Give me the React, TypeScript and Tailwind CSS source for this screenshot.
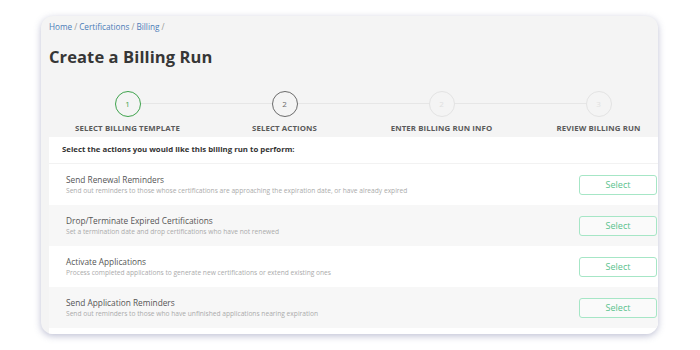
import React from "react";

const steps = [
  { n: "1", label: "SELECT BILLING TEMPLATE", state: "done" },
  { n: "2", label: "SELECT ACTIONS", state: "active" },
  { n: "2", label: "ENTER BILLING RUN INFO", state: "todo" },
  { n: "3", label: "REVIEW BILLING RUN", state: "todo" },
];

const actions = [
  {
    title: "Send Renewal Reminders",
    desc: "Send out reminders to those whose certifications are approaching the expiration date, or have already expired",
  },
  {
    title: "Drop/Terminate Expired Certifications",
    desc: "Set a termination date and drop certifications who have not renewed",
  },
  {
    title: "Activate Applications",
    desc: "Process completed applications to generate new certifications or extend existing ones",
  },
  {
    title: "Send Application Reminders",
    desc: "Send out reminders to those who have unfinished applications nearing expiration",
  },
];

export default function App() {
  return (
    <div
      className="w-[700px] h-[350px] bg-white overflow-hidden pt-[16px] pl-[41px]"
      style={{ fontFamily: '"Open Sans", "Noto Sans", Arial, sans-serif' }}
    >
      <div className="w-[617px] h-[318px] rounded-[12px] bg-[#f4f4f4] overflow-hidden shadow-[0_2px_7px_rgba(110,115,160,0.45)] flex flex-col">
        <div className="pl-[8px] pt-[3px] text-[8.2px] leading-[14px] text-[#4b7cb8] h-[18px] flex items-end">
          <span>Home</span>
          <span className="text-[#999] mx-[2px]">/</span>
          <span>Certifications</span>
          <span className="text-[#999] mx-[2px]">/</span>
          <span>Billing</span>
          <span className="text-[#999] mx-[2px]">/</span>
        </div>
        <h1 className="pl-[8px] mt-[11px] text-[16.5px] leading-[24px] font-bold text-[#363636] tracking-[0.1px]">
          Create a Billing Run
        </h1>
        <div className="relative mt-[22px] ml-[8px] flex w-[628px]">
          <div className="absolute left-[78px] right-[78px] top-[12px] h-px bg-[#e6e6e6]" />
          {steps.map((s, i) => (
            <div key={i} className="relative w-[157px] flex flex-col items-center">
              <div
                className={
                  "w-[26px] h-[26px] rounded-full flex items-center justify-center text-[8px] bg-[#f4f4f4] " +
                  (s.state === "done"
                    ? "border-[1.5px] border-[#3fa34d] text-[#3fa34d]"
                    : s.state === "active"
                    ? "border-[1.5px] border-[#6b6b6b] text-[#6b6b6b]"
                    : "border border-[#e3e3e3] text-[#e0e0e0]")
                }
              >
                {s.n}
              </div>
              <div className="mt-[6px] text-[7.85px] leading-[10px] font-bold text-[#5a5a5a] whitespace-nowrap tracking-[0.1px]">
                {s.label}
              </div>
            </div>
          ))}
        </div>
        <div className="mt-[4px] ml-[8px] flex-1 bg-white flex flex-col">
          <div className="h-[27px] flex items-center pl-[13px] text-[7.8px] font-bold text-[#333] border-b border-[#f2f2f2]">
            Select the actions you would like this billing run to perform:
          </div>
          {actions.map((a, i) => (
            <div
              key={i}
              className={
                "h-[41px] flex items-center justify-between pl-[17px] pr-[1px] " +
                (i % 2 === 1 ? "bg-[#f7f7f7]" : "bg-white")
              }
            >
              <div className="flex flex-col">
                <div className="text-[8.3px] leading-[12px] text-[#555]">{a.title}</div>
                <div className="text-[6.65px] leading-[9px] text-[#ababab]">{a.desc}</div>
              </div>
              <button className="w-[78px] h-[20px] rounded-[3px] border border-[#a6e6c6] text-[#58c28d] text-[9px] bg-white/40">
                Select
              </button>
            </div>
          ))}
        </div>
      </div>
    </div>
  );
}
